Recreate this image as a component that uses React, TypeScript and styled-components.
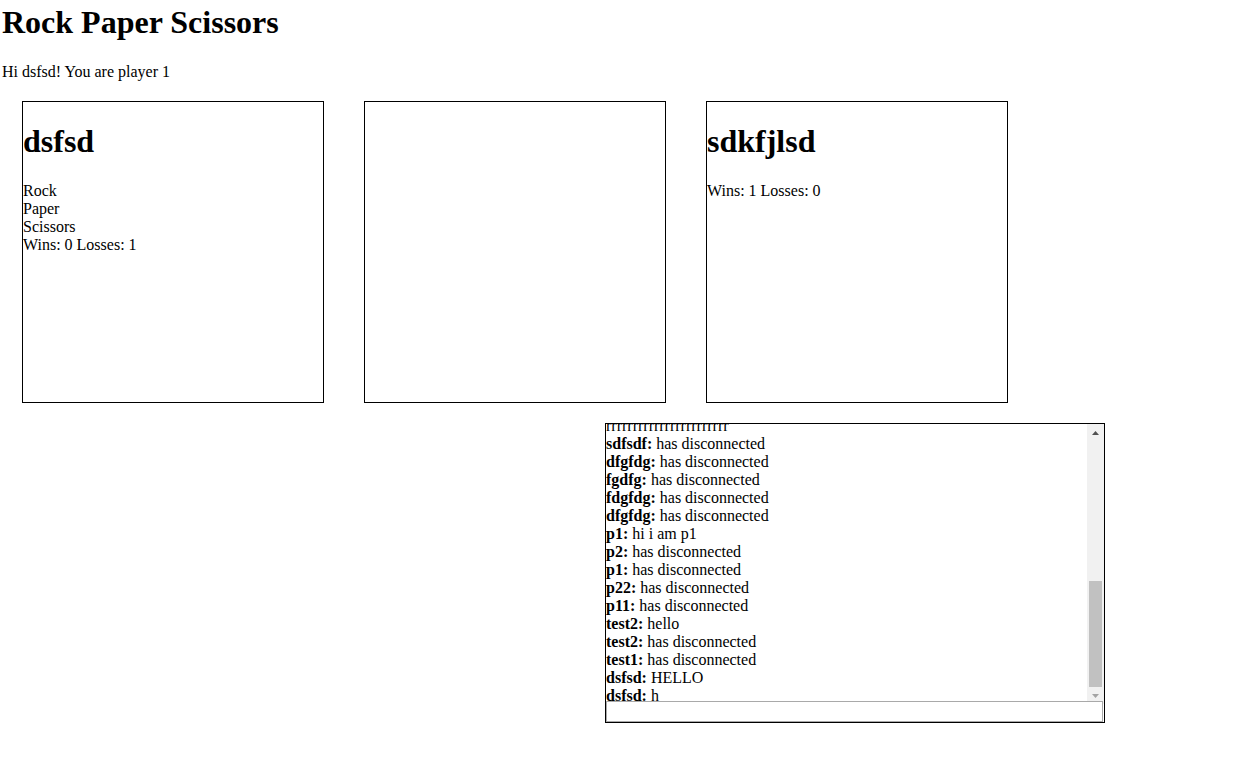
import styled, { createGlobalStyle } from 'styled-components';

type Player = {
  name: string;
  wins: number;
  losses: number;
  choices?: string[];
};

type Message = {
  author?: string;
  text: string;
};

const players: (Player | null)[] = [
  { name: 'dsfsd', wins: 0, losses: 1, choices: ['Rock', 'Paper', 'Scissors'] },
  null,
  { name: 'sdkfjlsd', wins: 1, losses: 0 },
];

const messages: Message[] = [
  { author: 'asd', text: 'has disconnected' },
  { author: 'qwe', text: 'hi' },
  { author: 'qwe', text: 'has disconnected' },
  { author: 'zxc', text: 'hello' },
  { author: 'zxc', text: 'has disconnected' },
  { author: 'abc', text: 'has disconnected' },
  { author: 'dsfsd', text: 'test' },
  { author: 'dsfsd', text: 'has disconnected' },
  { author: 'sdf', text: 'hello' },
  { author: 'sdf', text: 'has disconnected' },
  { author: 'rrr', text: 'has disconnected' },
  { author: 'rrr', text: 'rrrr' },
  { text: 'rrrrrrrrrrrrrrrrrrrrrrr' },
  { author: 'sdfsdf', text: 'has disconnected' },
  { author: 'dfgfdg', text: 'has disconnected' },
  { author: 'fgdfg', text: 'has disconnected' },
  { author: 'fdgfdg', text: 'has disconnected' },
  { author: 'dfgfdg', text: 'has disconnected' },
  { author: 'p1', text: 'hi i am p1' },
  { author: 'p2', text: 'has disconnected' },
  { author: 'p1', text: 'has disconnected' },
  { author: 'p22', text: 'has disconnected' },
  { author: 'p11', text: 'has disconnected' },
  { author: 'test2', text: 'hello' },
  { author: 'test2', text: 'has disconnected' },
  { author: 'test1', text: 'has disconnected' },
  { author: 'dsfsd', text: 'HELLO' },
  { author: 'dsfsd', text: 'h' },
];

const GlobalStyle = createGlobalStyle`
  body {
    margin: 0;
    background: #fff;
    color: #000;
    font-family: "Liberation Serif", "Times New Roman", serif;
    font-size: 16px;
    line-height: 18px;
  }
`;

const Page = styled.div`
  padding: 4px 2px 0;
`;

const Title = styled.h1`
  margin: 0 0 21.44px;
  font-size: 32px;
  line-height: 37px;
  font-weight: bold;
`;

const Greeting = styled.div`
  padding-top: 0.6px;
`;

const Board = styled.div`
  display: flex;
`;

const PlayerCard = styled.div`
  flex: none;
  width: 300px;
  height: 300px;
  margin: 20px;
  border: 1px solid #000;
`;

const PlayerName = styled.h1`
  margin: 21.44px 0;
  font-size: 32px;
  line-height: 37px;
  font-weight: bold;
`;

const Choice = styled.div``;

const Chat = styled.div`
  display: flex;
  flex-direction: column;
  width: 498px;
  margin-left: 603px;
  border: 1px solid #000;
`;

const Log = styled.div`
  display: flex;
  height: 280px;
`;

const MessageList = styled.div`
  flex: 1;
  display: flex;
  flex-direction: column;
  justify-content: flex-end;
  margin-bottom: -1px;
  overflow: hidden;
`;

const Line = styled.div`
  flex: none;
  white-space: nowrap;
`;

const Author = styled.b``;

const Scrollbar = styled.div`
  flex: none;
  display: flex;
  flex-direction: column;
  width: 17px;
  background: #f1f1f1;
`;

const ScrollButton = styled.div<{ $disabled?: boolean }>`
  flex: none;
  display: flex;
  align-items: center;
  justify-content: center;
  height: 17px;
  color: ${(p) => (p.$disabled ? '#a3a3a3' : '#505050')};
`;

const Thumb = styled.div<{ $size: number }>`
  flex: none;
  height: ${(p) => p.$size}px;
  margin: auto 2px 0;
  background: #c1c1c1;
`;

const ChatInput = styled.input`
  position: relative;
  box-sizing: border-box;
  width: 497px;
  height: 21px;
  margin: -3px 0 0;
  padding: 1px 2px;
  border: 1px solid #a9a9a9;
  background: #fff;
  font: 13.33px "Liberation Sans", Arial, sans-serif;
  outline: none;
`;

function Arrow({ up }: { up?: boolean }) {
  return (
    <svg width="7" height="4" viewBox="0 0 7 4">
      <path d={up ? 'M0 4 L3.5 0 L7 4 Z' : 'M0 0 L3.5 4 L7 0 Z'} fill="currentColor" />
    </svg>
  );
}

function App() {
  return (
    <Page>
      <GlobalStyle />
      <Title>Rock Paper Scissors</Title>
      <Greeting>Hi dsfsd! You are player 1</Greeting>
      <Board>
        {players.map((player, i) => (
          <PlayerCard key={i}>
            {player && (
              <>
                <PlayerName>{player.name}</PlayerName>
                {player.choices?.map((c) => (
                  <Choice key={c}>{c}</Choice>
                ))}
                <div>
                  Wins: {player.wins} Losses: {player.losses}
                </div>
              </>
            )}
          </PlayerCard>
        ))}
      </Board>
      <Chat>
        <Log>
          <MessageList>
            {messages.map((m, i) => (
              <Line key={i}>
                {m.author && <Author>{m.author}:</Author>} {m.text}
              </Line>
            ))}
          </MessageList>
          <Scrollbar>
            <ScrollButton>
              <Arrow up />
            </ScrollButton>
            <Thumb $size={106} />
            <ScrollButton $disabled>
              <Arrow />
            </ScrollButton>
          </Scrollbar>
        </Log>
        <ChatInput type="text" />
      </Chat>
    </Page>
  );
}

export default App;
